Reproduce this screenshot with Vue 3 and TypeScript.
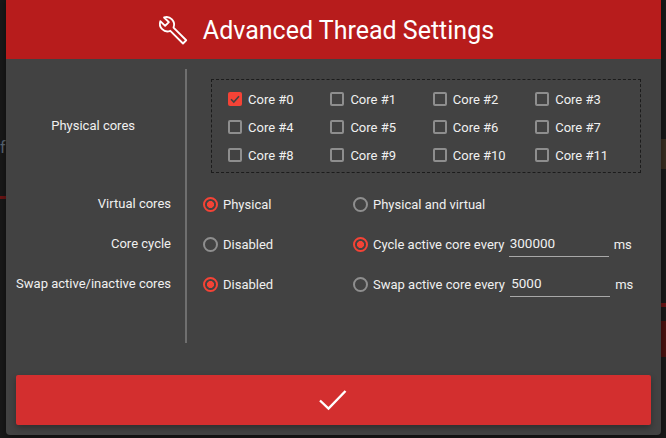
<script setup lang="ts">
const cores = Array.from({ length: 12 }, (_, i) => `Core #${i}`)
</script>

<template>
  <div class="page">
    <div class="backdrop">
      <span class="bg-letter">f</span>
      <i class="bg-red-left" />
      <i class="bg-brown" />
      <i class="bg-red-right" />
      <i class="bg-red-dark" />
    </div>
    <div class="dialog">
      <header class="title-bar">
        <svg class="wrench" viewBox="0 0 24 24" fill="none" stroke="#fff" stroke-width="1.4" stroke-linejoin="round">
          <path d="M21.9,19.7 L12.4,10.2 C13.2,8.2 12.8,5.7 11.2,4 C9.6,2.4 7.3,1.9 5.3,2.6 L8.9,6.1 L6.1,8.9 L2.5,5.4 C1.8,7.4 2.3,9.8 3.9,11.4 C5.5,13 8,13.4 10,12.6 L19.5,22.1 Z" />
        </svg>
        <h1>Advanced Thread Settings</h1>
      </header>

      <div class="form">
        <div class="row row-cores">
          <div class="label">Physical cores</div>
          <div class="content">
            <div class="core-grid">
              <label v-for="(core, i) in cores" :key="core" class="core">
                <span class="check" :class="{ on: i === 0 }">
                  <svg v-if="i === 0" viewBox="0 0 14 14" fill="none" stroke="#424242" stroke-width="1.6">
                    <path d="M3 7.2 L5.8 10 L11 4.2" />
                  </svg>
                </span>
                {{ core }}
              </label>
            </div>
          </div>
        </div>

        <div class="row">
          <div class="label">Virtual cores</div>
          <div class="content options">
            <div class="opt first"><span class="radio on" />Physical</div>
            <div class="opt"><span class="radio" />Physical and virtual</div>
          </div>
        </div>

        <div class="row">
          <div class="label">Core cycle</div>
          <div class="content options">
            <div class="opt first"><span class="radio" />Disabled</div>
            <div class="opt">
              <span class="radio on" />Cycle active core every
              <input class="num" value="300000" readonly />
              <span class="unit">ms</span>
            </div>
          </div>
        </div>

        <div class="row">
          <div class="label">Swap active/inactive cores</div>
          <div class="content options">
            <div class="opt first"><span class="radio on" />Disabled</div>
            <div class="opt">
              <span class="radio" />Swap active core every
              <input class="num swap" value="5000" readonly />
              <span class="unit">ms</span>
            </div>
          </div>
        </div>

        <div class="row row-spacer">
          <div class="label" />
          <div class="content" />
        </div>
      </div>

      <button class="confirm" type="button">
        <svg viewBox="0 0 28 22" fill="none" stroke="#fff" stroke-width="2.4">
          <path d="M1 11.5 L9.5 19.5 L26.5 2" />
        </svg>
      </button>
    </div>
  </div>
</template>

<style scoped>
.page {
  position: relative;
  width: 666px;
  height: 438px;
  overflow: hidden;
  background: #191919;
  font-family: Roboto, "Liberation Sans", sans-serif;
}

.backdrop i,
.bg-letter {
  position: absolute;
}

.bg-letter {
  left: 0;
  top: 139px;
  font-size: 16px;
  line-height: 18px;
  color: #5d6a76;
}

.bg-red-left {
  left: 0;
  top: 196px;
  width: 6px;
  height: 3px;
  background: #6e1515;
}

.bg-brown {
  right: 0;
  top: 139px;
  width: 5px;
  height: 30px;
  background: #3b2f22;
}

.bg-red-right {
  right: 0;
  top: 303px;
  width: 5px;
  height: 4px;
  background: #6e1515;
}

.bg-red-dark {
  right: 0;
  top: 321px;
  width: 5px;
  height: 36px;
  background: #4d1210;
}

.dialog {
  position: absolute;
  left: 6px;
  top: -4px;
  width: 655px;
  height: 439px;
  display: flex;
  flex-direction: column;
  background: #424242;
  border-radius: 4px;
  box-shadow: 0 2px 8px rgba(0, 0, 0, 0.5);
}

.title-bar {
  height: 63px;
  flex: none;
  padding: 4px 16px 0 0;
  box-sizing: border-box;
  display: flex;
  align-items: center;
  justify-content: center;
  gap: 14px;
  background: #b71c1c;
  border-radius: 4px 4px 0 0;
  color: #fff;
}

.wrench {
  width: 32px;
  height: 32px;
}

h1 {
  margin: 0;
  padding-top: 2px;
  font-size: 25px;
  font-weight: 400;
}

.form {
  margin-top: 10px;
}

.row {
  display: flex;
  height: 40px;
}

.row-cores {
  height: 115px;
}

.row-spacer {
  height: 39px;
}

.label {
  width: 165px;
  flex: none;
  text-align: right;
  font-size: 13px;
  line-height: 40px;
  color: #f0f0f0;
}

.row-cores .label {
  width: 129px;
  padding-right: 36px;
  line-height: 114px;
  box-sizing: content-box;
}

.content {
  margin-left: 14px;
  flex: 1;
  padding-left: 16px;
  border-left: 2px solid #6f6f6f;
  box-sizing: border-box;
}

.core-grid {
  width: 430px;
  height: 94px;
  margin: 10px 0 0 8px;
  padding: 5px 0 0 16px;
  box-sizing: border-box;
  border: 1px dashed #1c1c1c;
  display: grid;
  grid-template-columns: repeat(4, 102.4px);
  grid-auto-rows: 28px;
}

.core {
  display: flex;
  align-items: center;
  gap: 6px;
  font-size: 13px;
  color: #f0f0f0;
}

.check {
  width: 14px;
  height: 14px;
  box-sizing: border-box;
  border: 2px solid #8e8e8e;
  border-radius: 2px;
}

.check.on {
  background: #f44336;
  border: 0;
}

.check svg {
  display: block;
}

.options {
  display: flex;
  align-items: center;
  font-size: 13px;
  color: #f0f0f0;
}

.opt {
  display: flex;
  align-items: center;
  white-space: pre;
}

.opt.first {
  width: 150px;
  flex: none;
}

.radio {
  width: 15px;
  height: 15px;
  margin-right: 5px;
  box-sizing: border-box;
  border: 2px solid #8e8e8e;
  border-radius: 50%;
  flex: none;
}

.radio.on {
  border-color: #f44336;
  background: radial-gradient(circle, #f44336 0 3.2px, transparent 3.8px);
}

.num {
  width: 100px;
  height: 24px;
  margin: 1px 0 0 1px;
  padding: 0 1px 2px;
  box-sizing: border-box;
  background: none;
  border: 0;
  border-bottom: 1px solid #a8a8a8;
  outline: none;
  font: inherit;
  font-size: 13.5px;
  color: #f0f0f0;
}

.num.swap {
  margin-left: 2px;
}

.unit {
  margin-left: 5px;
}

.confirm {
  width: 635px;
  height: 50px;
  margin: 32px 0 0 10px;
  padding: 0 1px 0 0;
  flex: none;
  border: 0;
  border-radius: 2px;
  display: flex;
  align-items: center;
  justify-content: center;
  background: #d32f2f;
  box-shadow: 0 3px 6px rgba(0, 0, 0, 0.3);
}

.confirm svg {
  width: 28px;
  height: 22px;
}
</style>
